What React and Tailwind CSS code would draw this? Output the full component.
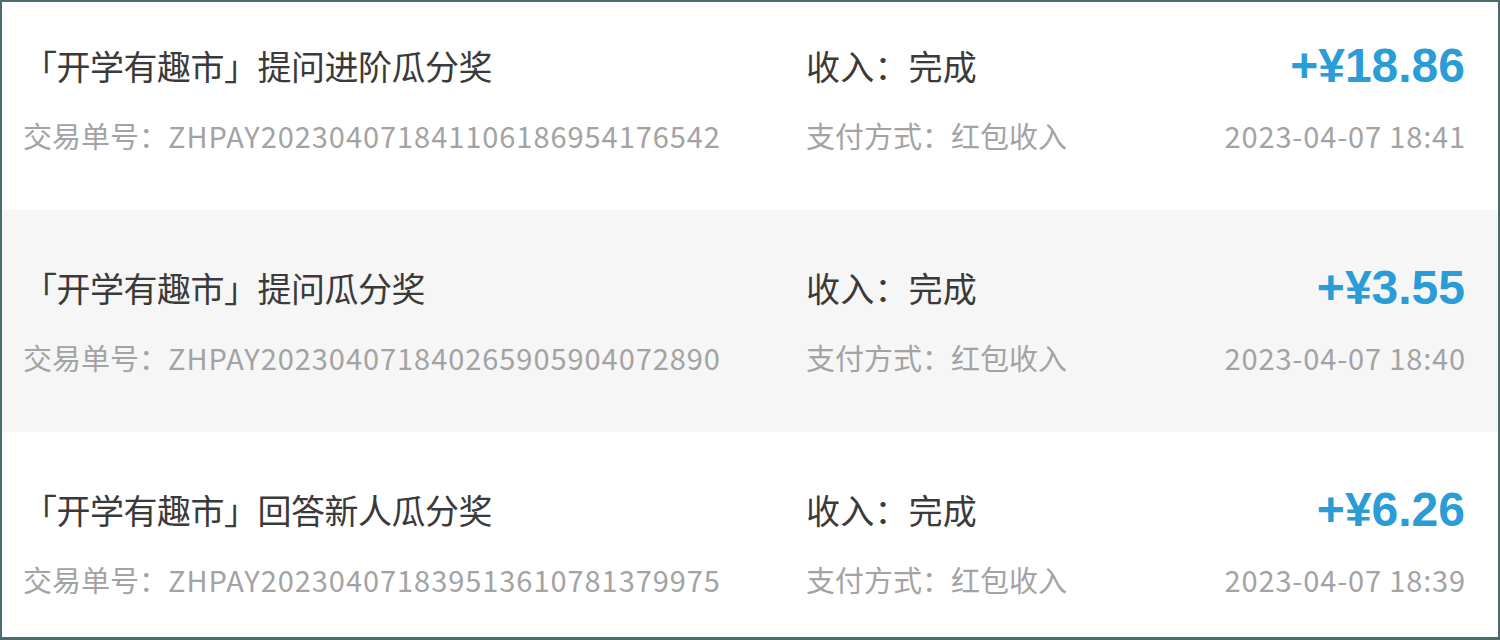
const rows = [
  { title: "「开学有趣市」提问进阶瓜分奖", no: "ZHPAY202304071841106186954176542", amt: "+¥18.86", time: "2023-04-07 18:41", bg: "bg-white", h: "h-[208px]", pt: "pt-[44px]" },
  { title: "「开学有趣市」提问瓜分奖", no: "ZHPAY202304071840265905904072890", amt: "+¥3.55", time: "2023-04-07 18:40", bg: "bg-[#f6f6f6]", h: "h-[222px]", pt: "pt-[58px]" },
  { title: "「开学有趣市」回答新人瓜分奖", no: "ZHPAY202304071839513610781379975", amt: "+¥6.26", time: "2023-04-07 18:39", bg: "bg-white", h: "h-[205px]", pt: "pt-[58px]" },
];

export default function App() {
  return (
    <div className="w-[1500px] h-[640px] border-2 border-b-[3px] border-[#4a6e70] bg-white overflow-hidden" style={{ fontFamily: '"Noto Sans CJK SC", "Noto Sans", sans-serif' }}>
      {rows.map((r, i) => (
        <div key={i} className={`${r.bg} ${r.h} ${r.pt} flex`}>
          <div className="w-[804px] pl-[21px] flex flex-col gap-[31px]">
            <div className="text-[34px] leading-[40px] text-[#3a3a3a] tracking-[-0.5px] whitespace-nowrap">{r.title}</div>
            <div className="text-[29px] leading-[36px] text-[#a3a3a3] whitespace-nowrap">
              <span>交易单号：</span>
              <span className="tracking-[0.95px]">{r.no}</span>
            </div>
          </div>
          <div className="flex-1 flex flex-col gap-[31px]">
            <div className="text-[34px] leading-[40px] text-[#3a3a3a] tracking-[0.2px]">收入：完成</div>
            <div className="text-[29px] leading-[36px] text-[#a3a3a3]">支付方式：红包收入</div>
          </div>
          <div className="pr-[33px] flex flex-col gap-[31px] items-end">
            <div className="text-[48px] leading-[40px] font-bold text-[#2a9cd6]" style={{ fontFamily: '"Liberation Sans", Arial, sans-serif' }}>{r.amt}</div>
            <div className="text-[29px] leading-[36px] text-[#a3a3a3] tracking-[0.85px] -mr-[1px]">{r.time}</div>
          </div>
        </div>
      ))}
    </div>
  );
}
